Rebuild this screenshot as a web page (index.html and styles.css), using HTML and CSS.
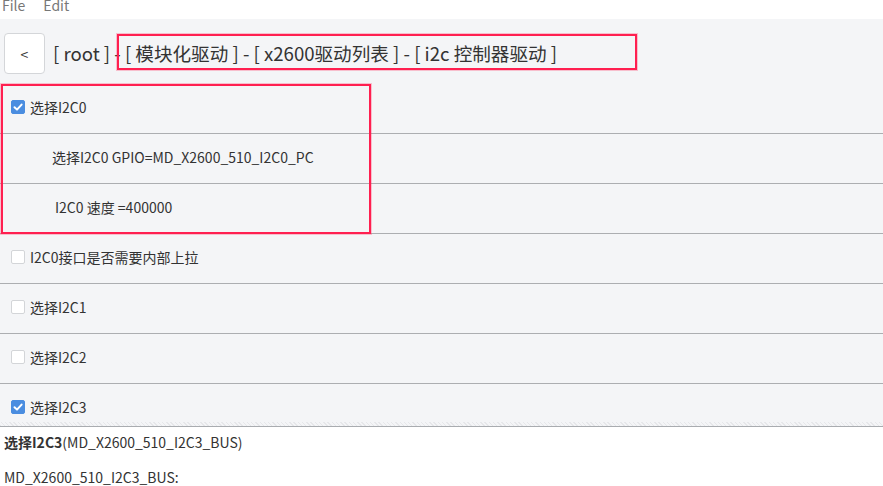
FILE: index.html
```html
<!DOCTYPE html>
<html lang="zh">
<head>
<meta charset="utf-8">
<link rel="stylesheet" href="styles.css">
</head>
<body>
<div class="menubar"><span>File</span><span>Edit</span></div>
<div class="main">
  <div class="header">
    <button class="back">&lt;</button>
    <div class="crumbs">[ root ] - [ 模块化驱动 ] - [ x2600驱动列表 ] - [ i2c 控制器驱动 ]</div>
  </div>
  <div class="list">
    <div class="row"><span class="cb on"><svg viewBox="0 0 14 14" width="14" height="14"><path d="M3.5 7.2 L6 9.6 L10.6 4.6" fill="none" stroke="#fff" stroke-width="2" stroke-linecap="round" stroke-linejoin="round"/></svg></span>选择I2C0</div>
    <div class="row sub1">选择I2C0 GPIO=MD_X2600_510_I2C0_PC</div>
    <div class="row sub2">I2C0 速度 =400000</div>
    <div class="row"><span class="cb"></span>I2C0接口是否需要内部上拉</div>
    <div class="row"><span class="cb"></span>选择I2C1</div>
    <div class="row"><span class="cb"></span>选择I2C2</div>
    <div class="row"><span class="cb on"><svg viewBox="0 0 14 14" width="14" height="14"><path d="M3.5 7.2 L6 9.6 L10.6 4.6" fill="none" stroke="#fff" stroke-width="2" stroke-linecap="round" stroke-linejoin="round"/></svg></span>选择I2C3</div>
  </div>
  <div class="noise"></div>
  <div class="mark mark-crumb"></div>
  <div class="mark mark-rows"></div>
</div>
<div class="details">
  <div class="d1"><b>选择I2C3</b>(MD_X2600_510_I2C3_BUS)</div>
  <div class="d2">MD_X2600_510_I2C3_BUS:</div>
</div>
</body>
</html>
```
FILE: styles.css
```css
* { box-sizing: border-box; }
html, body { margin: 0; padding: 0; background: #fff; }
body {
  font-family: "Noto Sans CJK SC", "Noto Sans", sans-serif;
  color: #333;
  width: 883px;
  height: 486px;
  overflow: hidden;
}
.menubar {
  height: 19px;
  display: flex;
  gap: 18px;
  padding-left: 2px;
  font-size: 14px;
  line-height: 14px;
  color: #777;
  overflow: hidden;
}
.menubar span { margin-top: -2px; }
.main {
  position: relative;
  height: 408px;
  background: #f4f5f7;
  border-bottom: 1px solid #a9acb0;
  overflow: hidden;
}
.header {
  display: flex;
  gap: 8px;
  padding: 14px 0 0 4px;
  height: 65px;
  align-items: flex-start;
}
.back {
  width: 41px;
  height: 41px;
  background: #fff;
  border: 1px solid #d4d6d9;
  border-radius: 4px;
  font-family: "Noto Sans CJK SC", sans-serif;
  font-size: 14px;
  color: #333;
  padding: 0;
  margin: 0;
}
.crumbs {
  font-size: 18.6px;
  line-height: 24px;
  padding-top: 8px;
  color: #333;
  white-space: nowrap;
}
.row {
  height: 50px;
  border-bottom: 1px solid #acaeb1;
  display: flex;
  align-items: center;
  padding: 0 0 4px 11px;
  font-size: 14px;
  color: #333;
  white-space: nowrap;
}
.row.sub1 { padding-left: 52px; }
.row.sub2 { padding-left: 55px; }
.cb {
  width: 14px;
  height: 14px;
  border: 1px solid #d3d5d8;
  background: #fff;
  border-radius: 2px;
  margin-right: 5px;
  flex: none;
  display: block;
}
.cb.on {
  background: #4a8de0;
  border-color: #4a8de0;
  position: relative;
}
.cb.on svg { position: absolute; left: -1px; top: -1px; }
.noise {
  position: absolute;
  left: 0; right: 0; bottom: 0;
  height: 4px;
  background-image: repeating-linear-gradient(45deg, #e6e7ea 0 1px, transparent 1px 3px);
}
.mark {
  position: absolute;
  border: 2px solid #ff1f50;
  box-shadow: 0 0 0 1px rgba(255,31,80,0.25);
}
.mark-crumb { left: 117px; top: 15px; width: 520px; height: 36px; }
.mark-rows { left: 1px; top: 65px; width: 370px; height: 150px; }
.details {
  padding: 4px 0 0 4px;
  font-size: 14px;
  color: #333;
}
.details b { font-weight: 700; }
.d1 { line-height: 22px; height: 35px; }
.d2 { line-height: 22px; }
```
